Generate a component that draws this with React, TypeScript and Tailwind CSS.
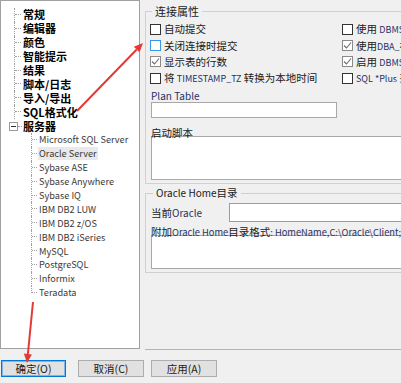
import React from 'react';

const topItems = ['常规', '编辑器', '颜色', '智能提示', '结果', '脚本/日志', '导入/导出', 'SQL格式化'];
const servers = [
  'Microsoft SQL Server',
  'Oracle Server',
  'Sybase ASE',
  'Sybase Anywhere',
  'Sybase IQ',
  'IBM DB2 LUW',
  'IBM DB2 z/OS',
  'IBM DB2 iSeries',
  'MySQL',
  'PostgreSQL',
  'Informix',
  'Teradata',
];

const Check = ({ checked, hover }: { checked?: boolean; hover?: boolean }) => (
  <span
    className={`w-[11px] h-[11px] shrink-0 bg-white border flex items-center justify-center ${
      checked ? 'border-[#8a8a8a]' : hover ? 'border-[#3c94e6]' : 'border-[#333333]'
    }`}
  >
    {checked && (
      <svg width="9" height="9" viewBox="0 0 9 9">
        <polyline points="1,4.5 3.5,7 8,1.5" fill="none" stroke="#6a6a6a" strokeWidth="1.1" />
      </svg>
    )}
  </span>
);

const Lat = ({ children }: { children: React.ReactNode }) => (
  <span className="text-[9px] text-[#26306a]">{children}</span>
);

const Option = ({ checked, hover, children }: { checked?: boolean; hover?: boolean; children: React.ReactNode }) => (
  <div className="h-[16.35px] flex items-center gap-[3px] whitespace-nowrap">
    <Check checked={checked} hover={hover} />
    <span>{children}</span>
  </div>
);

const TreePanel = () => (
  <div className="w-[140px] h-[349px] shrink-0 bg-white border border-[#a0a0a0] pt-[7px] overflow-hidden">
    {topItems.map((t) => (
      <div key={t} className="h-[13.9px] flex items-stretch">
        <span className="ml-[13px] w-[7px] shrink-0 border-l border-dotted border-[#a0a0a0]">
          <span className="block h-1/2 border-b border-dotted border-[#a0a0a0]" />
        </span>
        <span className="ml-[2px] self-center font-bold text-[11px] leading-[13px] text-black">{t}</span>
      </div>
    ))}
    <div className="h-[13.9px] flex items-center">
      <span className="ml-[8px] w-[9px] h-[9px] shrink-0 border border-[#9a9a9a] flex items-center justify-center">
        <span className="w-[5px] h-[1px] bg-[#333]" />
      </span>
      <span className="w-[4px] border-t border-dotted border-[#a0a0a0]" />
      <span className="ml-[1px] font-bold text-[11px] leading-[13px] text-black">服务器</span>
    </div>
    {servers.map((s, i) => (
      <div key={s} className="h-[13.9px] flex items-stretch">
        <span
          className={`ml-[30px] w-[6px] shrink-0 border-dotted border-[#a0a0a0] ${
            i === servers.length - 1 ? 'border-l-0' : 'border-l'
          }`}
        >
          <span
            className={`block h-1/2 border-b border-dotted border-[#a0a0a0] ${
              i === servers.length - 1 ? 'border-l' : ''
            }`}
          />
        </span>
        <span
          className={`ml-[1px] px-[1px] self-center text-[9.2px] leading-[13px] text-[#3a3a3a] ${
            s === 'Oracle Server' ? 'bg-[#e9e9e9]' : ''
          }`}
        >
          {s}
        </span>
      </div>
    ))}
  </div>
);

export default function App() {
  return (
    <div className="w-[401px] h-[383px] relative overflow-hidden bg-[#f0f0f0] text-[10.5px] text-[#1a1a1a] font-['Noto_Sans_CJK_SC',sans-serif] flex flex-col">
      <div className="flex h-[350px]">
        <TreePanel />
        <div className="flex-1 min-w-0 overflow-hidden pl-[5px] flex flex-col">
          <fieldset className="mt-[4px] w-[300px] shrink-0 border border-[#d0d0d0] pl-[4px] pb-[3px]">
            <legend className="ml-[2px] px-[3px] leading-[14px] text-[11px]">连接属性</legend>
            <div className="grid grid-cols-[192px_1fr] mt-[3px]">
              <div className="flex flex-col">
                <Option>自动提交</Option>
                <Option hover>关闭连接时提交</Option>
                <Option checked>显示表的行数</Option>
                <Option>
                  将 <Lat>TIMESTAMP_TZ</Lat> 转换为本地时间
                </Option>
              </div>
              <div className="flex flex-col">
                <Option>
                  使用 <Lat>DBMS_METADATA</Lat>
                </Option>
                <Option checked>
                  使用<Lat>DBA_</Lat>视图
                </Option>
                <Option checked>
                  启用 <Lat>DBMS_OUTPUT</Lat>
                </Option>
                <Option>
                  <Lat>SQL *Plus</Lat> 兼容
                </Option>
              </div>
            </div>
            <div className="mt-[4px] ml-[1px] h-[12px] leading-[12px] text-[10px] text-[#26306a]">Plan Table</div>
            <div className="ml-[1px] w-[186px] h-[16px] bg-white border border-[#a8a8a8]" />
            <div className="mt-[9px] ml-[1px] h-[12px] leading-[12px]">启动脚本</div>
            <div className="-mt-[3px] ml-[1px] w-[290px] h-[44px] bg-white border border-[#a8a8a8]" />
          </fieldset>

          <fieldset className="mt-[2px] w-[300px] shrink-0 border border-[#d0d0d0] pl-[5px] pb-[3px]">
            <legend className="ml-[2px] px-[3px] leading-[14px] text-[10.5px]">
              <span className="text-[10px]">Oracle Home</span>目录
            </legend>
            <div className="mt-[3px] h-[19px] flex items-center">
              <span className="w-[78px] shrink-0">
                当前<span className="text-[10px] text-[#2a3160]">Oracle</span>
              </span>
              <div className="flex-1 h-[19px] bg-white border border-[#8f8fff]" />
            </div>
            <div className="mt-[4px] h-[12px] leading-[12px] whitespace-nowrap">
              附加<span className="text-[9.3px] text-[#2a3160]">Oracle Home</span>目录格式
              <span className="text-[9.3px] text-[#2a3160]">: HomeName,C:\Oracle\Client;</span>
            </div>
            <div className="-mt-[3px] w-[290px] h-[34px] bg-white border border-[#a8a8a8]" />
          </fieldset>

          <div className="mt-auto h-[1px] bg-[#b4b4b4]" />
        </div>
      </div>

      <div className="mt-[10px] flex pl-[1px]">
        <button className="w-[65px] h-[17px] bg-[#e1e1e1] border border-[#0078d7] shadow-[inset_0_0_0_1px_#7fb7e8] text-[10.5px] leading-[15px]">
          确定(O)
        </button>
        <button className="ml-[12px] w-[66px] h-[17px] bg-[#e1e1e1] border border-[#adadad] text-[10.5px] leading-[15px]">
          取消(C)
        </button>
        <button className="ml-[7px] w-[66px] h-[17px] bg-[#e1e1e1] border border-[#adadad] text-[10.5px] leading-[15px]">
          应用(A)
        </button>
      </div>

      <svg className="absolute inset-0 pointer-events-none" width="401" height="383" viewBox="0 0 401 383">
        <line x1="77" y1="111" x2="136.7" y2="49.5" stroke="#e53935" strokeWidth="2" />
        <polygon points="143,43 139.6,52.3 133.8,46.7" fill="#e53935" />
        <line x1="33" y1="302" x2="27.9" y2="354" stroke="#e53935" strokeWidth="2" />
        <polygon points="27,363 31.9,354.4 23.9,353.6" fill="#e53935" />
      </svg>
    </div>
  );
}
